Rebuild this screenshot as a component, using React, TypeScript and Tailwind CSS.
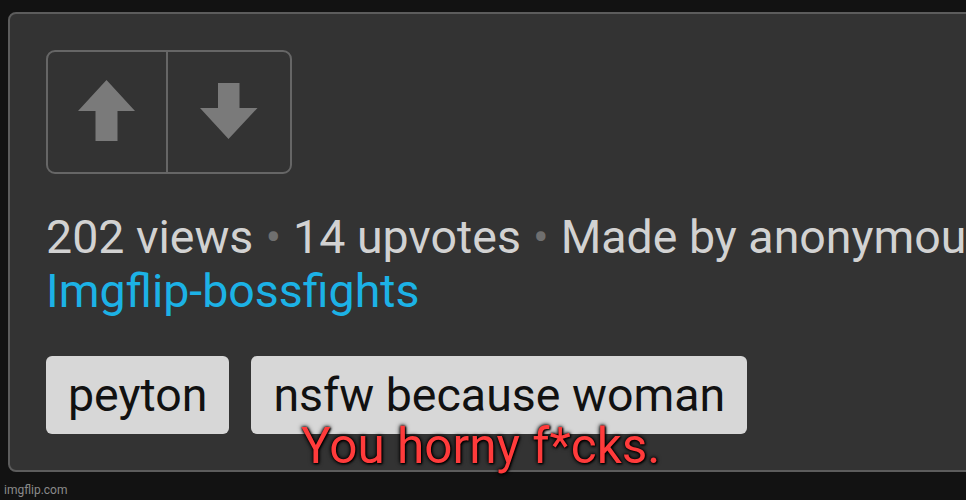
import { FC } from "react";

const UpArrow: FC = () => (
	<svg width="58" height="62" viewBox="0 0 58 62" className="fill-[#7a7a7a]">
		<path d="M28.5 0 L57 31 L39.5 31 L39.5 61 L17.5 61 L17.5 31 L0 31 Z" />
	</svg>
);

const DownArrow: FC = () => (
	<svg width="58" height="57" viewBox="0 0 58 57" className="fill-[#7a7a7a]">
		<path d="M18 0 L39.5 0 L39.5 25 L57.5 25 L28.5 56 L0 25 L18 25 Z" />
	</svg>
);

const Tag: FC<{ label: string }> = ({ label }) => (
	<span className="rounded-[6px] bg-[#d7d7d7] px-[22px] py-[12px] text-[46.5px] leading-[54px] text-[#111]">
		{label}
	</span>
);

const Dot: FC = () => <span className="px-[12px] text-[#6f6f6f]">•</span>;

export default function App() {
	return (
		<div
			className="relative h-[500px] w-[966px] overflow-hidden bg-[#121212]"
			style={{ fontFamily: "Roboto, 'Liberation Sans', sans-serif" }}
		>
			<div className="ml-[8px] mt-[12px] h-[460px] w-[1000px] rounded-[8px] border-2 border-[#5c5c5c] bg-[#333333] pl-[36px] pt-[36px]">
				<div className="flex h-[124px] w-[246px] rounded-[9px] border-2 border-[#666]">
					<div className="flex w-[120px] items-center justify-center border-r-2 border-[#666] pb-[2px]">
						<UpArrow />
					</div>
					<div className="flex flex-1 items-center justify-center pb-[2px]">
						<DownArrow />
					</div>
				</div>

				<div className="mt-[36px] whitespace-nowrap text-[46.5px] leading-[54px]">
					<div className="text-[#d2d2d2]">
						202 views
						<Dot />
						14 upvotes
						<Dot />
						Made by anonymous
					</div>
					<div className="text-[#1cb2e6]">Imgflip-bossfights</div>
				</div>

				<div className="mt-[38px] flex gap-[22px]">
					<Tag label="peyton" />
					<Tag label="nsfw because woman" />
				</div>
			</div>

			<div
				className="absolute left-[301px] top-[418px] whitespace-nowrap text-[49.5px] leading-[57px] text-[#ff3b3b]"
				style={{ textShadow: "0 0 3px #000, 0 0 5px #000, 1px 1px 2px #000" }}
			>
				You horny f*cks.
			</div>

			<div className="absolute left-[4px] top-[482px] text-[12px] leading-[16px] text-[#8a8a8a]">
				imgflip.com
			</div>
		</div>
	);
}
